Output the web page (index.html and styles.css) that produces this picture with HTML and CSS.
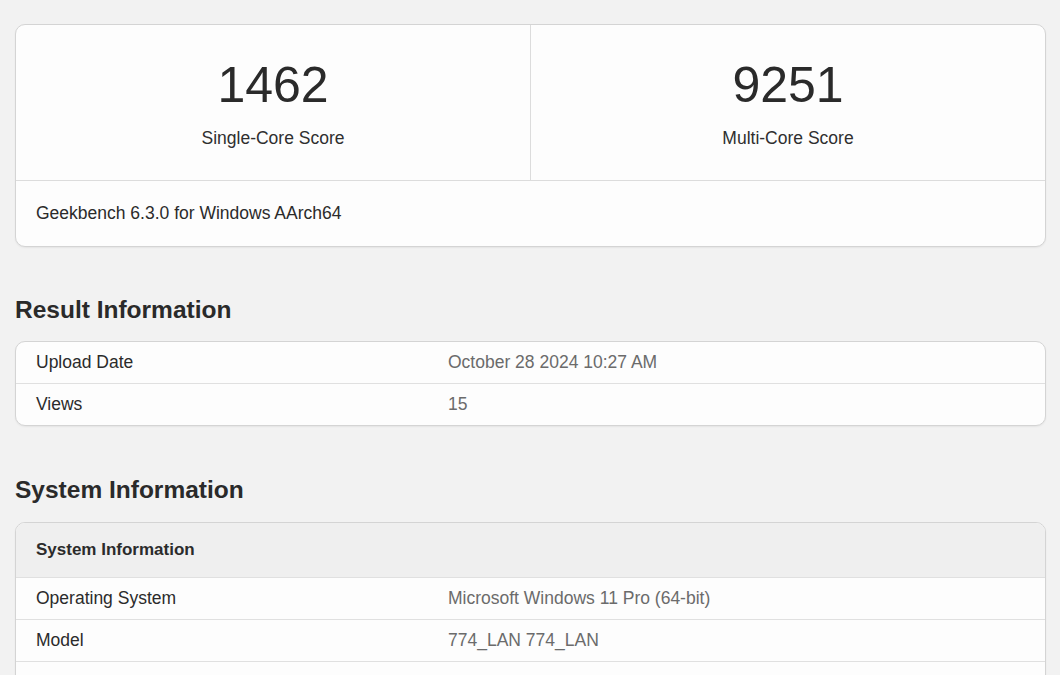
FILE: index.html
```html
<!DOCTYPE html>
<html>
<head>
<meta charset="utf-8">
<link rel="stylesheet" href="styles.css">
</head>
<body>
<div class="page">
  <div class="card scores">
    <div class="score-row">
      <div class="score">
        <div class="score-num">1462</div>
        <div class="score-label">Single-Core Score</div>
      </div>
      <div class="score">
        <div class="score-num">9251</div>
        <div class="score-label">Multi-Core Score</div>
      </div>
    </div>
    <div class="version">Geekbench 6.3.0 for Windows AArch64</div>
  </div>

  <h2 class="section-title">Result Information</h2>
  <div class="card table">
    <div class="row"><div class="key">Upload Date</div><div class="val">October 28 2024 10:27 AM</div></div>
    <div class="row"><div class="key">Views</div><div class="val">15</div></div>
  </div>

  <h2 class="section-title section-sys">System Information</h2>
  <div class="card table">
    <div class="row head"><div class="key">System Information</div></div>
    <div class="row"><div class="key">Operating System</div><div class="val">Microsoft Windows 11 Pro (64-bit)</div></div>
    <div class="row"><div class="key">Model</div><div class="val">774_LAN 774_LAN</div></div>
    <div class="row"><div class="key">Motherboard</div><div class="val">774_LAN 774_LAN</div></div>
  </div>
</div>
</body>
</html>
```

FILE: styles.css
```css
html, body {
  margin: 0;
  padding: 0;
  background: #f2f2f2;
}
body {
  font-family: "Liberation Sans", Arial, sans-serif;
  color: #2b2b2b;
  font-size: 17.5px;
}
.page {
  padding: 24px 14px 0 15px;
}
.card {
  background: #fdfdfd;
  border: 1px solid #d4d4d4;
  border-radius: 10px;
  box-shadow: 0 1px 2px rgba(0,0,0,0.06);
  overflow: hidden;
}
.score-row {
  display: flex;
  border-bottom: 1px solid #dcdcdc;
}
.score {
  flex: 1;
  text-align: center;
  padding: 31px 0 30px;
}
.score + .score {
  border-left: 1px solid #dcdcdc;
}
.score-num {
  font-size: 50px;
  line-height: 58px;
  color: #2a2a2a;
}
.score-label {
  margin-top: 12px;
  line-height: 24px;
  color: #2f2f2f;
}
.version {
  padding: 21px 20px 21px 20px;
  line-height: 23px;
}
.section-title {
  margin: 48px 0 16px;
  font-size: 24.5px;
  line-height: 30px;
  font-weight: bold;
  color: #2a2a2a;
}
.section-sys {
  margin-top: 49px;
  margin-bottom: 17px;
}
.table .row {
  display: flex;
  height: 41px;
  align-items: center;
  padding: 0 20px;
}
.table .row + .row {
  border-top: 1px solid #e0e0e0;
}
.table .row.head {
  height: 54px;
  background: #efefef;
  font-weight: bold;
  font-size: 17px;
}
.key {
  width: 412px;
  color: #2b2b2b;
}
.val {
  color: #6b6b6b;
}
```
